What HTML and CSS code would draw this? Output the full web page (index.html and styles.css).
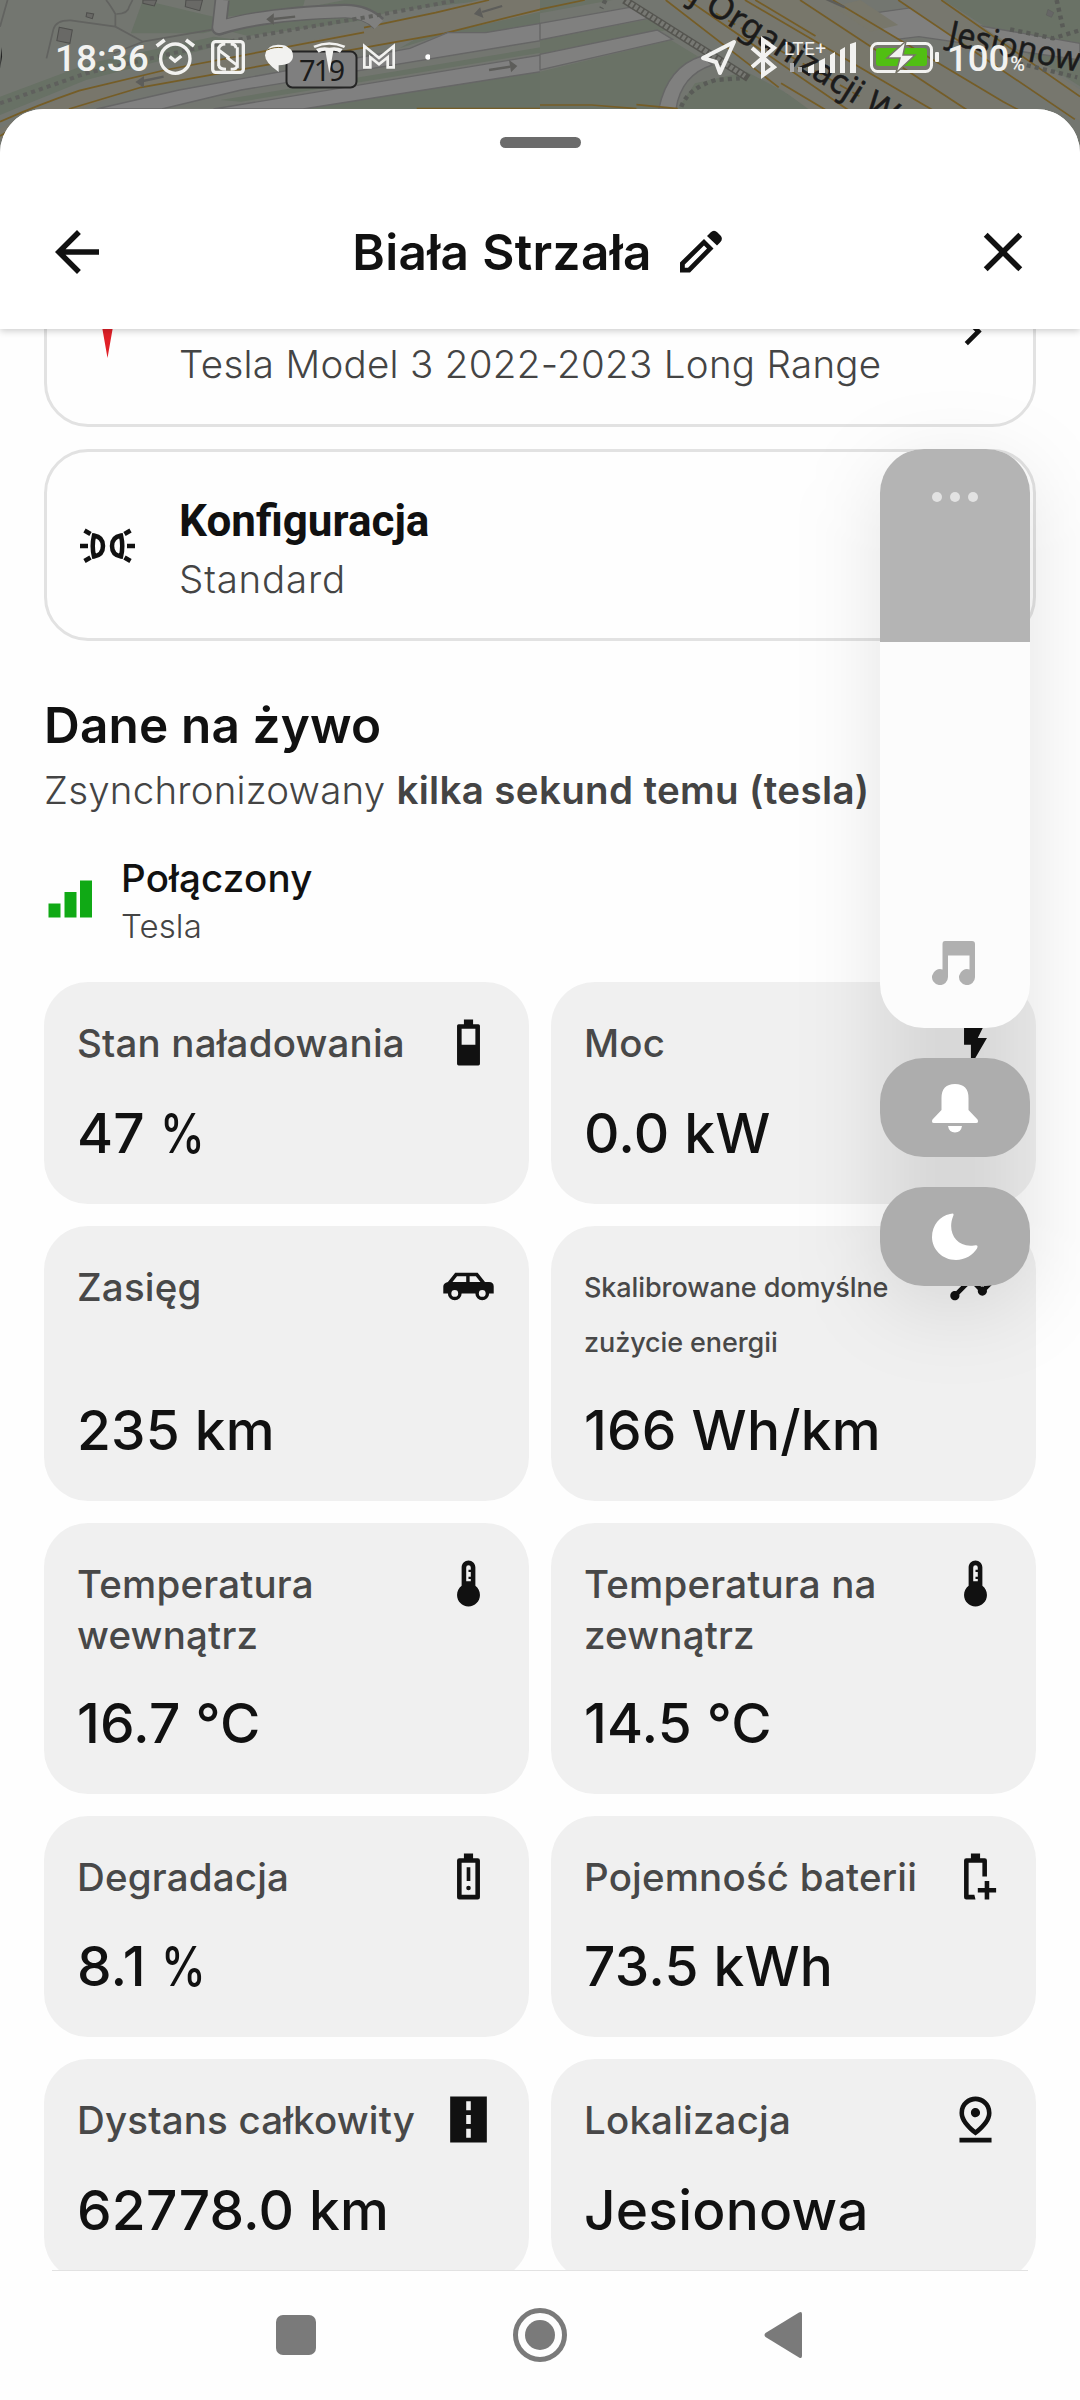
FILE: index.html
```
<!DOCTYPE html>
<html lang="pl">
<head>
<meta charset="utf-8">
<title>Biała Strzała</title>
<link rel="stylesheet" href="styles.css">
</head>
<body>
<div class="screen">
  <svg class="map" viewBox="0 0 1080 160" aria-hidden="true">
    <g transform="scale(.3444 .3333)" fill="none">
      <rect width="1570" height="480" fill="#737670"/>
      <path d="M415 0L620 50V92L590 100H380ZM665 0H885L880 20L700 45L660 50ZM720 108L1060 60L1130 35L1420 0H1000L880 25L660 92ZM0 290L260 190L620 110L700 120L250 240L0 345ZM880 327L1570 210V330ZM640 300L1570 142V158L700 305ZM1160 145L1310 96L1420 98L1570 70V0L1300 60Z" fill="#687165"/>
      <path d="M135 175L155 88Q162 60 205 61L335 80L415 125L620 88M335 80V42Q320 15 308 0M338 42Q372 42 375 20L385 0M415 125L330 160M22 0L0 80" stroke="#626360" stroke-width="5"/>
      <path d="M0 385Q120 320 230 272L480 210L1057 90L1420 -8H1600V28L1290 100L800 190L410 262L200 340L0 420Z" fill="#78766b"/>
      <path d="M0 365Q110 315 230 272L480 210L1057 97M1057 83L1265 38L1420 0M0 408L30 390M200 327L410 262L800 190L1290 100L1570 28" stroke="#755d27" stroke-width="5"/>
      <path d="M645 0L636 85Q760 42 1000 33Q1060 32 1100 70" stroke="#626262" stroke-width="44" stroke-linejoin="round"/>
      <path d="M645 0L636 82Q760 42 1000 35Q1060 34 1100 74" stroke="#80807f" stroke-width="34" stroke-linejoin="round"/>
      <path d="M280 327L520 270L1190 145L1300 98H1410L1570 70V122L700 270L470 327Z" fill="#808080" stroke="#666" stroke-width="4"/>
      <path d="M620 327L1570 165V215L880 327Z" fill="#808080" stroke="#666" stroke-width="4"/>
      <path d="M0 310L250 220L500 160L760 105L1100 45L1330 0" stroke="#5f605d" stroke-width="12" stroke-dasharray="12 12"/>
      <path d="M475 230L415 243M857 50L795 57M1458 18L1400 36M1420 210L1482 200" stroke="#5d5d5a" stroke-width="7"/>
      <path d="M393 246L418 228V263ZM773 58L795 40V75ZM1376 42L1394 22L1404 54ZM1502 198L1478 180L1484 217Z" fill="#5d5d5a"/>
      <path d="M172 82L210 90L203 130L165 122ZM252 38L272 42L268 56L250 50ZM415 0H455L448 18L415 10ZM540 0H588L580 32L538 20Z" fill="#696966" stroke="#4f4f4d" stroke-width="3"/>
      <path d="M1210 326H1570" stroke="#755d27" stroke-width="5"/>
      <path d="M4 140L6 170L0 205Z" fill="#222"/>
    </g>
    <g transform="translate(540 0) scale(.3444 .3333)" fill="none">
      <rect width="1570" height="480" fill="#737670"/>
      <path d="M0 0H210L0 40ZM0 120L330 55L370 90L0 170ZM0 215L380 120L460 170Q380 200 350 327H0ZM400 327L450 250L600 215L700 270L790 327ZM1170 0H1570V260L1400 150Z" fill="#6a7266"/>
      <path d="M0 28L130 0" stroke="#755d27" stroke-width="5"/>
      <path d="M0 70L260 22L330 52L0 120ZM0 163L340 90L385 118L0 210ZM345 327Q370 200 470 168L500 195Q410 225 395 327ZM620 90L1100 20L1180 60L1568 130L1568 180L1100 110L700 160Z" fill="#80807f" stroke="#666" stroke-width="4"/>
      <path d="M355 0L693 262L790 335H1390L850 0Z" fill="#77776e"/>
      <path d="M1040 0L1570 365V270L1165 0Z" fill="#77776e"/>
      <path d="M750 0L1240 335H1140L600 0ZM850 20L930 0L1040 75L960 95Z" fill="#78776b"/>
      <path d="M365 0L693 262M700 250L830 330M430 0L895 330M595 0L1140 330M625 0L800 108M755 0L1240 330M850 0L1345 305L1390 330M1040 0L1553 358M1165 0L1568 290" stroke="#755d27" stroke-width="5"/>
      <path d="M510 40L930 290" stroke="#755d27" stroke-width="5" stroke-dasharray="24 18"/>
      <path d="M245 0L605 235" stroke="#555550" stroke-width="23"/>
      <path d="M250 3L595 228" stroke="#777873" stroke-width="15" stroke-dasharray="10 5"/>
      <path d="M410 320Q430 265 510 240L580 235M1365 88L1490 115L1570 90M1390 190L1560 232M1500 0L1520 90M190 0L178 25" stroke="#595b57" stroke-width="13" stroke-dasharray="12 12"/>
      <path d="M820 -8L885 22" stroke="#5d5d5a" stroke-width="7"/>
      <path d="M0 315H150L280 326M280 314L400 326" stroke="#755d27" stroke-width="5"/>
      <path d="M1475 28L1492 38L1485 52L1470 45Z" fill="#666" stroke="#555"/>
    </g>
    <rect x="286.500" y="51.500" width="70" height="36" rx="6" fill="#7f7f7f" stroke="#242424" stroke-width="2"/>
    <g class="map-text">
      <text x="299" y="81" font-size="29" textLength="46">719</text>
      <text class="street" transform="translate(689 1) rotate(32)" font-size="34" textLength="236" lengthAdjust="spacingAndGlyphs">j Organizacji W</text>
      <text class="street" transform="translate(947 44) rotate(12)" font-size="34" textLength="134" lengthAdjust="spacingAndGlyphs">Jesionow</text>
    </g>
  </svg>

  <header class="status">
    <span class="clock">18:36</span>
    <svg class="status-left" viewBox="0 0 840 180" aria-hidden="true">
      <g fill="none" stroke="#f2f2f0" stroke-width="10">
        <circle cx="76" cy="86" r="44"/>
        <path d="M59 80L75 93L94 78" stroke-width="10"/>
        <path d="M20 48L44 30M108 30L132 48" stroke-width="11"/>
        <rect x="188" y="35" width="92" height="92" rx="9"/>
        <path d="M206 108V60L238 84M262 52V106L230 82M206 60Q206 42 226 42M262 104Q262 118 242 118M258 55Q258 42 242 42M206 105Q208 118 228 118" stroke-width="9"/>
        <path d="M643 112V48L687 84L731 48V112H713V82L687 103L661 82V112Z" stroke-width="8"/>
      </g>
      <path d="M345 76Q350 44 384 44Q410 44 416 54Q429 60 429 78Q429 104 386 106V126Q345 98 345 76Z" fill="#f2f2f0"/>
      <path d="M352 60Q370 50 398 53" stroke="#755d27" stroke-width="3" fill="none"/>
      <path d="M490 47Q538 26 586 47L582 54Q538 34 494 54ZM498 57Q516 49 538 53Q560 49 578 57L570 68Q560 61 550 62L538 130L526 62Q516 61 506 68Z" fill="#f2f2f0"/>
      <circle cx="834" cy="81" r="8" fill="#fff"/>
    </svg>
    <svg class="status-right" viewBox="0 0 245 60" aria-hidden="true">
      <path d="M3 28L34 12L20 43L16 32Z" fill="none" stroke="#f2f2f0" stroke-width="4" stroke-linejoin="round"/>
      <path d="M52 18L74 37L63 45V10L74 18L52 37" fill="none" stroke="#f2f2f0" stroke-width="4"/>
      <text class="lte" x="84" y="24.500" font-size="19" textLength="42">LTE+</text>
      <path d="M90 42V33H94V42ZM98 42V37H102V42Z" fill="#aaa"/>
      <path d="M108 43V37L114 34V43ZM119 43V31L125 28V43ZM130 43V25L135 22V43ZM140 43V20L145 17V43ZM150 43V14L156 12V43Z" fill="#f2f2f0"/>
      <rect x="171.500" y="13.500" width="60" height="28" rx="6" fill="none" stroke="#f2f2f0" stroke-width="3"/>
      <rect x="176" y="18" width="51" height="18" rx="3" fill="#51bf12"/>
      <path d="M206 11L187 28H200L196 43L215 25H203Z" fill="#f2f2f0" stroke="#777568" stroke-width="1.500"/>
      <rect x="235" y="22" width="4" height="10" rx="1" fill="#f2f2f0"/>
    </svg>
    <span class="pct">100<small>%</small></span>
  </header>

  <main class="sheet">
    <div class="topbar">
      <div class="handle"></div>
      <div class="titles">
        <svg class="i66" viewBox="0 0 24 24"><path d="M20 11H7.830l5.590-5.590L12 4l-8 8 8 8 1.410-1.410L7.830 13H20z"/></svg>
        <div class="title"><h1>Biała Strzała</h1>
          <svg class="pencil" viewBox="0 0 64 64"><path fill-rule="evenodd" d="M10 42.500L34 19L43.500 28.500L20 52.500H10ZM14.800 44.500V47.700H18L37 28.500L34 25.500ZM37 16L40.500 12.500Q44 9 47.500 12.500L50.500 15.500Q53.500 19 50 22.500L47 25.500Z"/></svg>
        </div>
        <svg class="i66" viewBox="0 0 24 24"><path d="M19 6.410L17.590 5 12 10.590 6.410 5 5 6.410 10.590 12 5 17.590 6.410 19 12 13.410 17.590 19 19 17.590 13.410 12z"/></svg>
      </div>
    </div>

    <div class="scroll">
      <section class="card first">
        <svg class="i55" viewBox="0 0 55 55"><path fill="#e02028" d="M2 6Q27.500-4 53 6L51 10Q27.500 1 4 10ZM6 12Q16 7 27.500 13Q39 7 49 12L45 20Q38 15 34 17L27.500 54L21 17Q17 15 10 20Z"/></svg>
        <div class="card-text"><strong>Tesla</strong><span>Tesla Model 3 2022-2023 Long Range</span></div>
        <svg class="i55" viewBox="0 0 24 24"><path d="M10 6L8.590 7.410 13.170 12l-4.580 4.590L10 18l6-6z"/></svg>
      </section>
      <section class="card">
        <svg class="i55 stroked" viewBox="0 0 55 55"><path d="M14 17.500Q11.500 28 14 38.500Q23 37 23 28Q23 19 14 17.500ZM41 17.500Q43.500 28 41 38.500Q32 37 32 28Q32 19 41 17.500ZM0 28H8M55 28H47M4.500 12.500L10.500 16M50.500 12.500L44.500 16M4.500 43L10.500 39.500M50.500 43L44.500 39.500"/></svg>
        <div class="card-text"><strong>Konfiguracja</strong><span class="wide">Standard</span></div>
      </section>

      <h2>Dane na żywo</h2>
      <p class="sync">Zsynchronizowany <b>kilka sekund temu (tesla)</b></p>
      <div class="link">
        <svg class="i55 green" viewBox="0 0 55 55"><path d="M4.500 30.500H16.500V44.500H4.500ZM20.500 19H32.500V44.500H20.500ZM36 7.500H48V44.500H36Z"/></svg>
        <div><div class="link-name">Połączony</div><div class="link-src">Tesla</div></div>
      </div>

      <div class="tiles">
        <article class="tile"><div class="row"><span>Stan naładowania</span>
          <svg class="i55" viewBox="0 0 24 24"><path fill-rule="evenodd" d="M14 2V4H16.300Q17 4 17 4.700V21.300Q17 22 16.300 22H7.700Q7 22 7 21.300V4.700Q7 4 7.700 4H10V2ZM9 6V13H15V6Z"/></svg></div><b>47 <i>%</i></b></article>
        <article class="tile"><div class="row"><span>Moc</span>
          <svg class="i55" viewBox="0 0 24 24"><path d="M7 2v11h3v9l7-12h-4l4-8z"/></svg></div><b>0.0 kW</b></article>
        <article class="tile"><div class="row"><span>Zasięg</span>
          <svg class="i55" viewBox="0 0 24 24"><path fill-rule="evenodd" d="M6.200 6H16L19.200 10H21Q23 10 23 12V15H21A3 3 0 0 1 15 15H9A3 3 0 0 1 3 15H1V12Q1 10.500 3 10ZM7 7.500L5 10H11V7.500ZM12.500 7.500V10H17.200L15.200 7.500ZM6 13.500A1.500 1.500 0 1 0 6 16.500A1.500 1.500 0 1 0 6 13.500ZM18 13.500A1.500 1.500 0 1 0 18 16.500A1.500 1.500 0 1 0 18 13.500Z"/></svg></div><b>235 km</b></article>
        <article class="tile"><div class="row"><span class="small">Skalibrowane domyślne<br>zużycie energii</span>
          <svg class="i55" viewBox="0 0 24 24"><path d="M23 8c0 1.100-.9 2-2 2-.18 0-.35-.02-.51-.07l-3.560 3.550c.05.160.070.340.070.520 0 1.100-.9 2-2 2s-2-.9-2-2c0-.18.020-.36.070-.52l-2.550-2.550c-.16.050-.34.070-.52.070s-.36-.02-.52-.07l-4.550 4.560c.05.160.070.330.070.510 0 1.100-.9 2-2 2s-2-.9-2-2 .9-2 2-2c.18 0 .35.020.51.070l4.560-4.550C8.020 9.360 8 9.180 8 9c0-1.100.9-2 2-2s2 .9 2 2c0 .18-.02.36-.07.520l2.550 2.550c.16-.05.340-.07.520-.07s.36.020.520.070l3.550-3.560C19.020 8.350 19 8.180 19 8c0-1.100.9-2 2-2s2 .9 2 2z"/></svg></div><b>166 Wh/km</b></article>
        <article class="tile"><div class="row"><span>Temperatura wewnątrz</span>
          <svg class="i55" viewBox="0 0 24 24"><path fill-rule="evenodd" d="M15 13V5c0-1.660-1.340-3-3-3S9 3.340 9 5v8c-1.210.910-2 2.370-2 4 0 2.760 2.240 5 5 5s5-2.240 5-5c0-1.630-.79-3.090-2-4zM11 11V5Q11 4 12 4T13 5V6H12V7H13V9H12V10H13V11Z"/></svg></div><b>16.7 °C</b></article>
        <article class="tile"><div class="row"><span>Temperatura na zewnątrz</span>
          <svg class="i55" viewBox="0 0 24 24"><path fill-rule="evenodd" d="M15 13V5c0-1.660-1.340-3-3-3S9 3.340 9 5v8c-1.210.910-2 2.370-2 4 0 2.760 2.240 5 5 5s5-2.240 5-5c0-1.630-.79-3.090-2-4zM11 11V5Q11 4 12 4T13 5V6H12V7H13V9H12V10H13V11Z"/></svg></div><b>14.5 °C</b></article>
        <article class="tile"><div class="row"><span>Degradacja</span>
          <svg class="i55" viewBox="0 0 24 24"><path fill-rule="evenodd" d="M14 2V4H16Q17 4 17 5V21Q17 22 16 22H8Q7 22 7 21V5Q7 4 8 4H10V2ZM9 6V20H15V6ZM11.200 8H12.800V14H11.200ZM12 16A1 1 0 1 1 12 18A1 1 0 1 1 12 16Z"/></svg></div><b>8.1 <i>%</i></b></article>
        <article class="tile"><div class="row"><span>Pojemność baterii</span>
          <svg class="i55" viewBox="0 0 24 24"><path d="M14 2V4H16Q17 4 17 5V12H15V6H9V20H11.500L12 22H8Q7 22 7 21V5Q7 4 8 4H10V2ZM16 14H18V17H21V19H18V22H16V19H13V17H16Z"/></svg></div><b>73.5 kWh</b></article>
        <article class="tile"><div class="row"><span>Dystans całkowity</span>
          <svg class="i55" viewBox="0 0 24 24"><path fill-rule="evenodd" d="M4 2H20V22H4ZM11 4V8H13V4ZM11 10V14H13V10ZM11 16V20H13V16Z"/></svg></div><b>62778.0 km</b></article>
        <article class="tile"><div class="row"><span>Lokalizacja</span>
          <svg class="i55" viewBox="0 0 24 24"><path d="M12 4c1.930 0 5 1.400 5 5.150 0 2.160-1.720 4.670-5 7.320-3.280-2.650-5-5.170-5-7.320C7 5.400 10.070 4 12 4m0-2C8.730 2 5 4.460 5 9.150c0 3.120 2.330 6.410 7 9.850 4.670-3.440 7-6.730 7-9.850C19 4.460 15.270 2 12 2zm0 5c-1.100 0-2 .9-2 2s.9 2 2 2a2 2 0 1 0 0-4zM5 20h14v2H5v-2z"/></svg></div><b>Jesionowa</b></article>
      </div>
    </div>
  </main>

  <footer class="nav">
    <svg viewBox="0 0 1080 129" fill="#7a7a7a"><rect x="276" y="44" width="40" height="40" rx="7"/><circle cx="540" cy="64" r="24.500" fill="none" stroke="#7a7a7a" stroke-width="5"/><circle cx="540" cy="64" r="15"/><path d="M765.500 62L799 41.500Q802 40 802 43V85Q802 88 799 86.500L765.500 66Q763.500 64 765.500 62Z"/></svg>
  </footer>

  <aside class="volume">
    <div class="glow"></div>
    <div class="slider">
      <div class="level"><i></i><i></i><i></i></div>
      <svg class="note" viewBox="0 0 43 44" fill="#b0b0b0"><path fill-rule="evenodd" d="M13 0H40Q43 0 43 3V36A8 8 0 1 1 37.500 28.500V14.500H16V36A8 8 0 1 1 10.500 28.500V3Q10.500 0 13 0Z"/></svg>
    </div>
    <div class="pill"><svg viewBox="0 0 46 50" fill="#fff"><path d="M9.500 15Q9.500 1 23 1T36.500 15V27L45.500 36.500Q47 40 44 40H2Q-1 40 .5 36.500L9.500 27ZM16 43H30Q29 49.500 23 49.500T16 43Z"/></svg></div>
    <div class="pill"><svg viewBox="0 0 46 50" fill="#fff"><path d="M18 2Q23 0 21 4.500C15 20 24 36 42 33.500Q47 32.500 45 36.500C41 43 33 48 24 48C10 48 0 37 0 25C0 13 8 4 18 2Z"/></svg></div>
  </aside>
</div>
</body>
</html>
```
FILE: styles.css
```
* { box-sizing: border-box; }
body { margin: 0; background: #fefefe; font-family: Inter, "Noto Sans", sans-serif; color: #111; }
h1, h2, p { margin: 0; }
svg { display: block; flex: none; }
.screen { position: relative; width: 1080px; height: 2400px; overflow: hidden; display: flex; flex-direction: column; }

.map { position: absolute; left: 0; top: 0; width: 1080px; height: 160px; }
.map-text { font-family: "Noto Sans", sans-serif; fill: #1b1b1b; }
.street { stroke: #1b1b1b; stroke-width: .5px; }
.status { position: relative; height: 109px; flex: none; display: flex; align-items: flex-start; padding: 30px 0 0 55px; font-family: Roboto, sans-serif; color: #f2f2f0; font-weight: 500; }
.clock { width: 95px; font-size: 37px; line-height: 60px; margin-top: -1px; }
.status-left { width: 280px; height: 60px; }
.status-right { width: 245px; height: 60px; margin-left: 270px; }
.lte { fill: #f2f2f0; font-family: Roboto, sans-serif; font-weight: 400; }
.pct { font-size: 36.500px; line-height: 60px; margin: -1px 0 0 2px; white-space: nowrap; }
.pct small { font-size: 20px; margin-left: 1px; }

.sheet { position: relative; height: 2161px; flex: none; background: #fefefe; border-radius: 44px 44px 0 0; overflow: hidden; }
.topbar { position: relative; z-index: 1; height: 220px; background: #fff; box-shadow: 0 2px 7px rgba(0, 0, 0, .2); padding-top: 28px; display: flex; flex-direction: column; align-items: center; }
.handle { width: 81px; height: 11px; border-radius: 6px; background: #6b6b6b; }
.titles { align-self: stretch; margin-top: 71px; padding: 0 44px; height: 66px; display: flex; align-items: center; justify-content: space-between; }
.title { display: flex; align-items: center; gap: 18px; margin-right: 6px; }
h1 { font-size: 49.500px; line-height: 62px; font-weight: 600; letter-spacing: .35px; }
.i66 { width: 66px; height: 66px; fill: #111; }
.i55 { width: 55px; height: 55px; fill: #111; }
.green { fill: #10a915; }
.stroked { fill: none; stroke: #111; stroke-width: 4.500; }
.pencil { width: 64px; height: 64px; margin-right: -12px; fill: #111; }

.scroll { padding: 0 44px; display: flex; flex-direction: column; }
.card { height: 192px; border: 3px solid #e2e2e2; border-radius: 44px; padding: 0 33px; display: flex; align-items: center; gap: 44px; }
.first { margin: -94px 0 22px; }
.card-text { flex: 1; display: flex; flex-direction: column; }
.card-text strong { font: 700 44px/68px Roboto, sans-serif; }
.card-text span { font-size: 38.500px; line-height: 48px; font-weight: 350; color: #444; letter-spacing: .3px; white-space: nowrap; }
.card-text .wide { letter-spacing: .8px; }
.first .card-text { padding-bottom: 2px; }

h2 { margin-top: 53px; font-size: 49.500px; line-height: 62px; font-weight: 600; letter-spacing: .15px; }
.sync { margin-top: 9px; font-size: 38.500px; line-height: 50px; font-weight: 350; letter-spacing: .2px; color: #444; white-space: nowrap; }
.sync b { font-weight: 600; letter-spacing: .35px; }
.link { margin-top: 38px; display: flex; gap: 22px; }
.link .i55 { margin-top: 20px; }
.link-name { font-size: 38.500px; line-height: 50px; font-weight: 450; letter-spacing: .2px; }
.link-src { margin-top: 1px; font-size: 33px; line-height: 44px; font-weight: 350; letter-spacing: .1px; color: #444; }

.tiles { margin-top: 34px; display: grid; grid-template-columns: 1fr 1fr; grid-template-rows: 222px 275px 271px 221px 222px; gap: 22px; }
.tile { background: #f0f0f0; border-radius: 44px; padding: 33px; display: flex; flex-direction: column; justify-content: space-between; overflow: hidden; }
.row { display: flex; justify-content: space-between; gap: 8px; }
.row span { padding-top: 3px; font-size: 38.500px; line-height: 51px; font-weight: 480; letter-spacing: .18px; color: #484848; }
.row .small { padding-top: 1px; font-size: 27px; line-height: 55px; letter-spacing: -.1px; white-space: nowrap; }
.tile b { font-weight: 480; font-size: 55px; line-height: 76px; letter-spacing: .2px; }
.tile i { display: inline-block; font-style: normal; transform: scaleX(.82); transform-origin: 0 50%; }

.nav { position: relative; flex: 1; background: #fefefe; }
.nav::before { content: ""; position: absolute; left: 52px; right: 52px; top: 0; height: 1px; background: #e2e2e2; }
.nav svg { width: 1080px; height: 129px; margin-top: 1px; }

.volume { position: absolute; left: 880px; top: 449px; width: 150px; display: flex; flex-direction: column; gap: 30px; }
.glow { position: absolute; left: 0; top: 20px; width: 150px; height: 837px; border-radius: 44px; background: rgba(0, 0, 0, .105); filter: blur(42px); }
.slider, .pill { position: relative; border-radius: 44px; overflow: hidden; }
.slider { height: 579px; background: #fcfcfc; display: flex; flex-direction: column; align-items: center; justify-content: space-between; padding-bottom: 43px; }
.level { align-self: stretch; height: 193px; background: #b4b4b4; display: flex; justify-content: center; gap: 8px; padding-top: 43px; }
.level i { width: 10px; height: 10px; border-radius: 50%; background: #e2e2e2; }
.note { width: 43px; height: 44px; margin-right: 4px; }
.pill { height: 99px; background: #adadad; display: flex; align-items: center; justify-content: center; }
.pill svg { width: 46px; height: 50px; }
```
